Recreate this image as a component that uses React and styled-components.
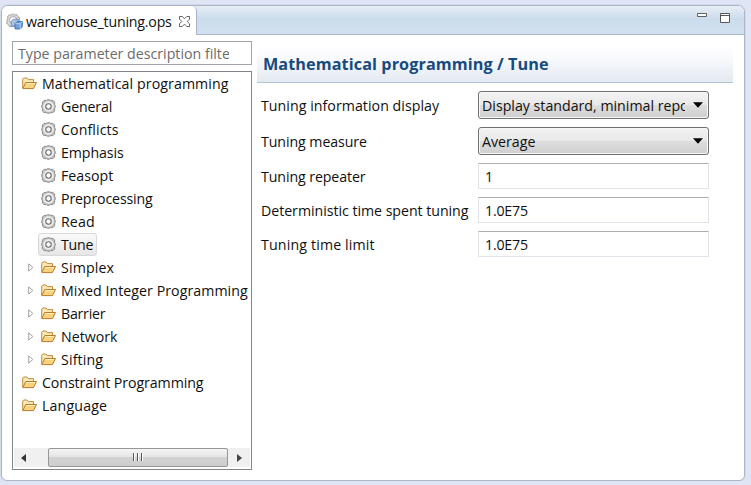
import React from "react";
import styled, { createGlobalStyle } from "styled-components";

const Global = createGlobalStyle`
  * { box-sizing: border-box; }
  body {
    margin: 0;
    background: #dfe5f4;
    color: #101010;
    font: 14.2px/22px "Open Sans", "Noto Sans", sans-serif;
    overflow: hidden;
  }
  svg { display: block; flex: none; }
`;

const Frame = styled.div`
  width: 744px;
  height: 476px;
  margin: 5px 0 0 1px;
  display: flex;
  flex-direction: column;
  background: #fff;
  border: 1px solid #a9b5c9;
  border-radius: 7px 7px 6px 6px;
  box-shadow: 0 0 0 1px #d3dbeb;
  overflow: hidden;
`;

const TabBar = styled.div`
  flex: none;
  height: 29px;
  display: flex;
  justify-content: space-between;
  background: linear-gradient(#e6eef6, #cbdcec 45%, #d3e1ef);
`;

const Tab = styled.div`
  width: 195px;
  display: flex;
  align-items: center;
  padding: 2px 0 0 4px;
  background: #fff;
  border-right: 1px solid #a9b5c9;
  border-top-right-radius: 5px;
`;

const Label = styled.span`
  white-space: nowrap;
  letter-spacing: ${(p) => p.$spacing || 0}px;
`;

const TabTitle = styled(Label)`
  width: 153px;
  margin-left: 3px;
`;

const BarFill = styled.div`
  flex: 1;
  display: flex;
  justify-content: flex-end;
  gap: 13px;
  padding: 7px 14px 0 0;
  border-bottom: 1px solid #aab6cc;
`;

const Body = styled.div`
  flex: 1;
  display: flex;
  padding: 6px 0 10px 10px;
`;

const Sidebar = styled.div`
  width: 240px;
  display: flex;
  flex-direction: column;
  gap: 6px;
`;

const Filter = styled.div`
  height: 24px;
  padding: 1px 22px 0 5px;
  border: 1px solid #a2a4a8;
  color: #6b6b6b;
`;

const Clip = styled.div`
  overflow: hidden;
  white-space: nowrap;
  letter-spacing: ${(p) => p.$spacing || 0}px;
`;

const Tree = styled.div`
  flex: 1;
  display: flex;
  flex-direction: column;
  justify-content: space-between;
  padding: 0 1px 2px;
  border: 1px solid #82858c;
`;

const Row = styled.div`
  height: 23px;
  display: flex;
  align-items: center;
  padding-left: ${(p) => (p.$level ? 14 : 5)}px;
`;

const Expander = styled.div`
  flex: none;
  width: 10px;
`;

const Item = styled.div`
  height: 23px;
  display: flex;
  align-items: center;
  gap: 5px;
  padding: 0 3px 0 2px;
  border: 1px solid ${(p) => (p.$selected ? "#d9d9d9" : "transparent")};
  border-radius: 3px;
  background: ${(p) => (p.$selected ? "linear-gradient(#fafafa, #e6e6e6)" : "none")};
`;

const Scrollbar = styled.div`
  height: 19px;
  display: flex;
  align-items: center;
  background: #f0f0f0;
`;

const ScrollArrow = styled.div`
  width: ${(p) => p.$width}px;
  padding-left: ${(p) => p.$inset}px;
`;

const Thumb = styled.div`
  width: 180px;
  height: 19px;
  display: flex;
  align-items: center;
  justify-content: center;
  padding: 0 2px 2px 0;
  border: 1px solid #969696;
  border-radius: 2px;
  background: linear-gradient(#f4f4f4, #e6e6e6 45%, #d2d2d2 50%, #cecece);
`;

const Main = styled.div`
  width: 476px;
  margin-left: 5px;
  padding-top: 4px;
`;

const Heading = styled.div`
  height: 38px;
  padding-left: 6px;
  border-bottom: 1px solid #b4c3d8;
  background: linear-gradient(#fff, #f7f9fc 40%, #e3e9f2);
  color: #174a7e;
  font-size: 16.2px;
  font-weight: 700;
  line-height: 39px;
`;

const Form = styled.div`
  display: flex;
  flex-direction: column;
  padding: 8px 0 0 4px;
  gap: 8px;
`;

const Field = styled.div`
  display: grid;
  grid-template-columns: 217px 231px;
  align-items: center;
`;

const FieldLabel = styled(Label)`
  padding-top: 2px;
`;

const Combo = styled.div`
  height: 28px;
  display: flex;
  align-items: center;
  justify-content: space-between;
  padding: 0 5px 0 3px;
  border: 1px solid #707070;
  border-radius: 3px;
  box-shadow: inset 0 0 0 1px #f8f8f8;
  background: linear-gradient(#f3f3f3, #e9e9e9 48%, #dddddd 52%, #cfcfcf);
`;

const ComboText = styled(Clip)`
  width: 203px;
  padding-top: 2px;
`;

const Input = styled.div`
  height: 26px;
  padding-left: 6px;
  line-height: 26px;
  border: 1px solid #e0e3ea;
  border-top-color: #abadb3;
  border-radius: 1px;
  letter-spacing: -0.2px;
`;

const Gear = () => (
  <svg width="15" height="15" viewBox="0 0 15 15">
    <path d="M3 1.4h2.4l1-.6h2.2l1 .6H12l1.6 1.6v2.4l.6 1v2.2l-.6 1V12L12 13.6H9.6l-1 .6H6.4l-1-.6H3L1.4 12V9.6l-.6-1V6.4l.6-1V3Z" fill="#c2c2c2" stroke="#858585" strokeWidth=".9" />
    <circle cx="7.5" cy="7.5" r="4.7" fill="#e6e6e6" stroke="#f8f8f8" />
    <circle cx="7.5" cy="7.5" r="2.7" fill="#fff" stroke="#6c6c6c" strokeWidth="1.1" />
  </svg>
);

const Folder = () => (
  <svg width="15" height="13" viewBox="0 0 15 13">
    <path d="M.7 11V2.2L1.7 1H5l1.3 1.6h5.2v2.9" fill="#fbe9b8" stroke="#c08a3c" />
    <path d="M.8 11.6 3.7 5.5h10.8l-3 6.1Z" fill="#f8d27c" stroke="#b97c2c" />
    <path d="M4.3 6.5h8.6" stroke="#fff0bd" />
  </svg>
);

const FileIcon = () => (
  <svg width="17" height="17" viewBox="0 0 17 17">
    <path d="M3.5 1.8 5.5 2 7 .8 8.7 2l2.1-.3 1 1.9 1.8 1-.2 2.1 1 1.5-4.6 5-4.3.5-2.1-.2-1-2-1.8-1 .5-2L.8 7l1-1.7-.1-1.9Z" fill="#ddd" stroke="#999" strokeWidth=".9" />
    <circle cx="7.2" cy="7.2" r="3.7" fill="#fff" stroke="#a8a8a8" />
    <path d="m5.3 8.2 2-2h5v5l-2 2h-5Z" fill="#a9c4e6" stroke="#5d83b8" strokeWidth=".8" />
    <path d="m9 10.6 2-2h5.3v5l-2 2.4H9Z" fill="#6fa0da" stroke="#2d66a8" strokeWidth=".8" />
    <path d="M9.3 10.7h4.9V16m0-5.3 2-2" fill="none" stroke="#c9def5" strokeWidth=".8" />
  </svg>
);

const CloseIcon = () => (
  <svg width="11" height="11" viewBox="0 0 11 11">
    <path d="M.5.5h2.7l2.3 2.3L7.8.5h2.7v2.7L8.2 5.5l2.3 2.3v2.7H7.8L5.5 8.2l-2.3 2.3H.5V7.8l2.3-2.3L.5 3.2Z" fill="#fff" stroke="#505050" strokeWidth=".9" />
  </svg>
);

const Minimize = () => (
  <svg width="10" height="4"><path d="M.5.5h9v3h-9Z" fill="#fff" stroke="#606060" /></svg>
);
const Maximize = () => (
  <svg width="10" height="10"><path d="M.5.5h9v9h-9ZM.5 2.5h9" fill="#fff" stroke="#555" /></svg>
);
const Twist = () => (
  <svg width="6" height="9"><path d="M.7.9v7.2l4.2-3.6Z" fill="#fff" stroke="#979797" strokeWidth=".9" /></svg>
);
const ArrowLeft = () => (
  <svg width="5" height="8"><path d="M5 0v8L0 4Z" fill="#333" /></svg>
);
const ArrowRight = () => (
  <svg width="5" height="8"><path d="M0 0v8l5-4Z" fill="#444" /></svg>
);
const Grip = () => (
  <svg width="11" height="8"><path d="M1.5 0v8M5.5 0v8M9.5 0v8" stroke="#555" /><path d="M2.5 0v8M6.5 0v8M10.5 0v8" stroke="#fff" /></svg>
);
const Caret = () => (
  <svg width="10" height="6"><path d="M0 .3h10L5 5.7Z" fill="#000" /></svg>
);

const nodes = [
  { text: "Mathematical programming", root: true, folder: true, spacing: 0.08 },
  { text: "General", spacing: -0.15 },
  { text: "Conflicts", spacing: 0.1 },
  { text: "Emphasis", spacing: -0.1 },
  { text: "Feasopt", spacing: 0 },
  { text: "Preprocessing", spacing: -0.15 },
  { text: "Read", spacing: 0.1 },
  { text: "Tune", selected: true, spacing: -0.2 },
  { text: "Simplex", folder: true, spacing: 0.15 },
  { text: "Mixed Integer Programming", folder: true, spacing: 0.05 },
  { text: "Barrier", folder: true, spacing: -0.25 },
  { text: "Network", folder: true, spacing: 0 },
  { text: "Sifting", folder: true, spacing: 0.15 },
  { text: "Constraint Programming", root: true, folder: true, spacing: -0.08 },
  { text: "Language", root: true, folder: true, spacing: 0.15 },
];

const fields = [
  { label: "Tuning information display", value: "Display standard, minimal report", combo: true, spacing: 0.04 },
  { label: "Tuning measure", value: "Average", combo: true, spacing: -0.08 },
  { label: "Tuning repeater", value: "1", spacing: -0.1 },
  { label: "Deterministic time spent tuning", value: "1.0E75", spacing: -0.04 },
  { label: "Tuning time limit", value: "1.0E75", spacing: 0.15 },
];

export default function App() {
  return (
    <>
      <Global />
      <Frame>
        <TabBar>
          <Tab>
            <FileIcon />
            <TabTitle $spacing={-0.2}>warehouse_tuning.ops</TabTitle>
            <CloseIcon />
          </Tab>
          <BarFill>
            <Minimize />
            <Maximize />
          </BarFill>
        </TabBar>
        <Body>
          <Sidebar>
            <Filter><Clip>Type parameter description filter</Clip></Filter>
            <Tree>
              <div>
                {nodes.map((n) => (
                  <Row key={n.text} $level={n.root ? 0 : 1}>
                    {!n.root && <Expander>{n.folder && <Twist />}</Expander>}
                    <Item $selected={n.selected}>
                      {n.folder ? <Folder /> : <Gear />}
                      <Label $spacing={n.spacing}>{n.text}</Label>
                    </Item>
                  </Row>
                ))}
              </div>
              <Scrollbar>
                <ScrollArrow $width={34} $inset={7}><ArrowLeft /></ScrollArrow>
                <Thumb><Grip /></Thumb>
                <ScrollArrow $width={22} $inset={9}><ArrowRight /></ScrollArrow>
              </Scrollbar>
            </Tree>
          </Sidebar>
          <Main>
            <Heading><Label $spacing={0.09}>Mathematical programming / Tune</Label></Heading>
            <Form>
              {fields.map((f) => (
                <Field key={f.label}>
                  <FieldLabel $spacing={f.spacing}>{f.label}</FieldLabel>
                  {f.combo ? (
                    <Combo><ComboText>{f.value}</ComboText><Caret /></Combo>
                  ) : (
                    <Input>{f.value}</Input>
                  )}
                </Field>
              ))}
            </Form>
          </Main>
        </Body>
      </Frame>
    </>
  );
}
